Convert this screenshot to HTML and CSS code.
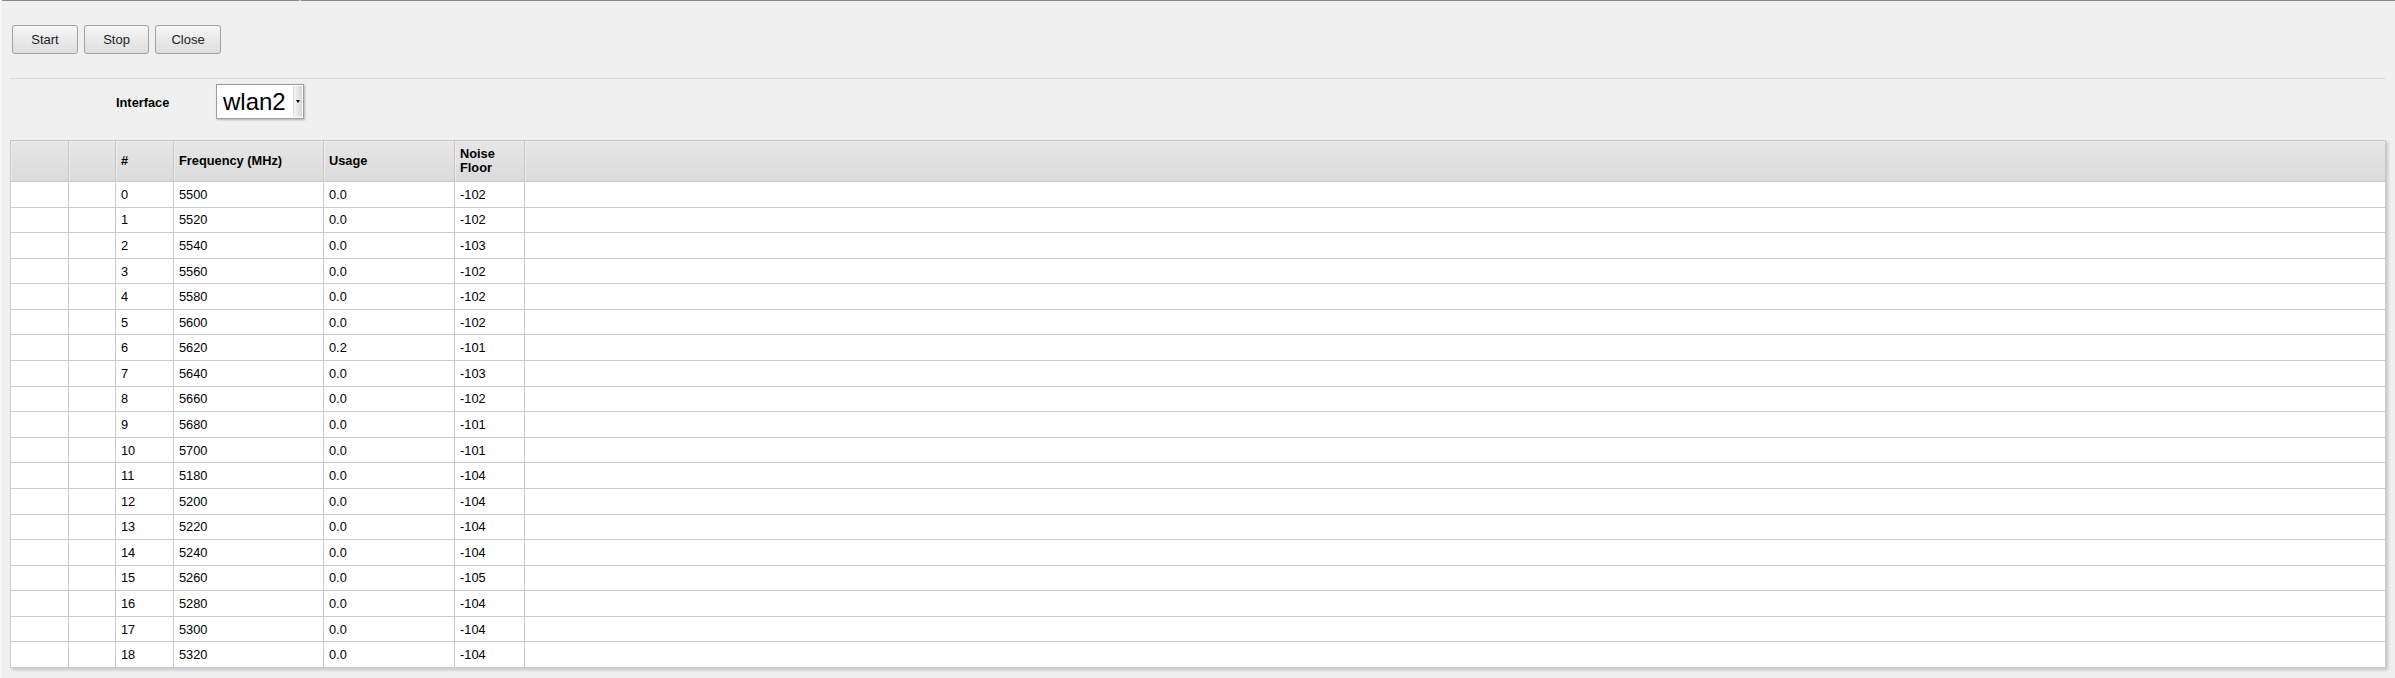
FILE: index.html
```html
<!DOCTYPE html>
<html lang="en">
<head>
  <meta charset="UTF-8" />
  <meta name="viewport" content="width=device-width, initial-scale=1.0"/>
  <title>Channel Scan</title>
  <link rel="stylesheet" href="styles.css">
</head>
<body>
  <div class="topline"><span class="seg-a"></span><span class="seg-gap"></span><span class="seg-b"></span></div>

  <div class="page">
    <div class="toolbar">
      <button class="btn">Start</button>
      <button class="btn">Stop</button>
      <button class="btn">Close</button>
    </div>

    <hr class="sep" />

    <div class="form-row">
      <label class="form-label" for="iface">Interface</label>
      <div class="select-wrap">
        <select id="iface" class="select">
          <option>wlan2</option>
        </select>
        <span class="select-arrow"></span>
      </div>
    </div>

    <table class="scan">
      <colgroup>
        <col class="c-a" />
        <col class="c-b" />
        <col class="c-num" />
        <col class="c-freq" />
        <col class="c-usage" />
        <col class="c-noise" />
        <col />
      </colgroup>
      <thead>
        <tr>
          <th></th>
          <th></th>
          <th>#</th>
          <th>Frequency (MHz)</th>
          <th>Usage</th>
          <th>Noise Floor</th>
          <th></th>
        </tr>
      </thead>
      <tbody>
        <tr><td></td><td></td><td>0</td><td>5500</td><td>0.0</td><td>-102</td><td></td></tr>
        <tr><td></td><td></td><td>1</td><td>5520</td><td>0.0</td><td>-102</td><td></td></tr>
        <tr><td></td><td></td><td>2</td><td>5540</td><td>0.0</td><td>-103</td><td></td></tr>
        <tr><td></td><td></td><td>3</td><td>5560</td><td>0.0</td><td>-102</td><td></td></tr>
        <tr><td></td><td></td><td>4</td><td>5580</td><td>0.0</td><td>-102</td><td></td></tr>
        <tr><td></td><td></td><td>5</td><td>5600</td><td>0.0</td><td>-102</td><td></td></tr>
        <tr><td></td><td></td><td>6</td><td>5620</td><td>0.2</td><td>-101</td><td></td></tr>
        <tr><td></td><td></td><td>7</td><td>5640</td><td>0.0</td><td>-103</td><td></td></tr>
        <tr><td></td><td></td><td>8</td><td>5660</td><td>0.0</td><td>-102</td><td></td></tr>
        <tr><td></td><td></td><td>9</td><td>5680</td><td>0.0</td><td>-101</td><td></td></tr>
        <tr><td></td><td></td><td>10</td><td>5700</td><td>0.0</td><td>-101</td><td></td></tr>
        <tr><td></td><td></td><td>11</td><td>5180</td><td>0.0</td><td>-104</td><td></td></tr>
        <tr><td></td><td></td><td>12</td><td>5200</td><td>0.0</td><td>-104</td><td></td></tr>
        <tr><td></td><td></td><td>13</td><td>5220</td><td>0.0</td><td>-104</td><td></td></tr>
        <tr><td></td><td></td><td>14</td><td>5240</td><td>0.0</td><td>-104</td><td></td></tr>
        <tr><td></td><td></td><td>15</td><td>5260</td><td>0.0</td><td>-105</td><td></td></tr>
        <tr><td></td><td></td><td>16</td><td>5280</td><td>0.0</td><td>-104</td><td></td></tr>
        <tr><td></td><td></td><td>17</td><td>5300</td><td>0.0</td><td>-104</td><td></td></tr>
        <tr><td></td><td></td><td>18</td><td>5320</td><td>0.0</td><td>-104</td><td></td></tr>
      </tbody>
    </table>
  </div>
</body>
</html>
```

FILE: styles.css
```css
html, body {
  margin: 0;
  height: 100%;
}

body {
  font-family: "Liberation Sans", Arial, sans-serif;
  font-size: 12.8px;
  color: #000;
  background-color: #f0f0f0;
  border-left: 2px solid #f6f6f6;
  box-sizing: border-box;
}

.topline {
  display: flex;
  height: 1px;
}

.seg-a {
  width: 297px;
  background-color: #8a8a8a;
}

.seg-gap {
  width: 2px;
  background-color: #c4c4c4;
}

.seg-b {
  flex: 1;
  background-color: #8a8a8a;
}

.page {
  padding: 0 9px 0 8px;
}

.toolbar {
  display: flex;
  gap: 6px;
  padding: 24px 0 0 2px;
}

.btn {
  width: 66px;
  height: 29px;
  font-family: inherit;
  font-size: 13px;
  color: #222;
  background: linear-gradient(#f6f6f6, #dedede);
  border: 1px solid #a0a0a0;
  border-radius: 3px;
  box-shadow: inset 0 1px 0 #fff;
  cursor: pointer;
}

.btn:nth-child(2) {
  width: 65px;
}

.sep {
  border: none;
  border-top: 1px solid #dadada;
  height: 0;
  margin: 24px 0 5px;
}

.form-row {
  display: flex;
  align-items: center;
  padding-left: 106px;
}

.form-label {
  width: 100px;
  font-weight: bold;
  padding-top: 1px;
}

.select-wrap {
  position: relative;
  width: 88px;
  height: 35px;
  box-shadow: 1px 1px 2px rgba(0,0,0,0.25);
}

.select {
  -webkit-appearance: none;
  appearance: none;
  width: 100%;
  height: 100%;
  box-sizing: border-box;
  margin: 0;
  padding: 0 0 1px 6px;
  font-family: "Liberation Sans", Arial, sans-serif;
  font-size: 24px;
  color: #000;
  background-color: #fff;
  border: 1px solid #9c9c9c;
  border-radius: 0;
}

.select-arrow {
  position: absolute;
  right: 2px;
  top: 2px;
  bottom: 2px;
  width: 8px;
  background: linear-gradient(to right, #f4f4f4, #d8d8d8);
  border-left: 1px solid #e0e0e0;
  pointer-events: none;
}

.select-arrow::after {
  content: "";
  position: absolute;
  left: 2px;
  top: 14px;
  border-left: 2px solid transparent;
  border-right: 2px solid transparent;
  border-top: 3px solid #000;
}

.scan {
  width: 100%;
  margin-top: 21px;
  table-layout: fixed;
  border-collapse: collapse;
  background-color: #fff;
  border: 1px solid #c8c8c8;
  box-shadow: 2px 2px 3px rgba(0,0,0,0.18);
}

.c-a { width: 58px; }
.c-b { width: 47px; }
.c-num { width: 58px; }
.c-freq { width: 150px; }
.c-usage { width: 131px; }
.c-noise { width: 70px; }

.scan th {
  height: 40px;
  padding: 0 5px;
  text-align: left;
  font-weight: bold;
  line-height: 14px;
  background: linear-gradient(#e6e6e6, #dadada);
  border: 1px solid #c8c8c8;
  box-shadow: inset 1px 1px 0 #ececec;
}

.scan td {
  height: 24.58px;
  padding: 0 5px;
  border: 1px solid #cccccc;
  white-space: nowrap;
}
```
